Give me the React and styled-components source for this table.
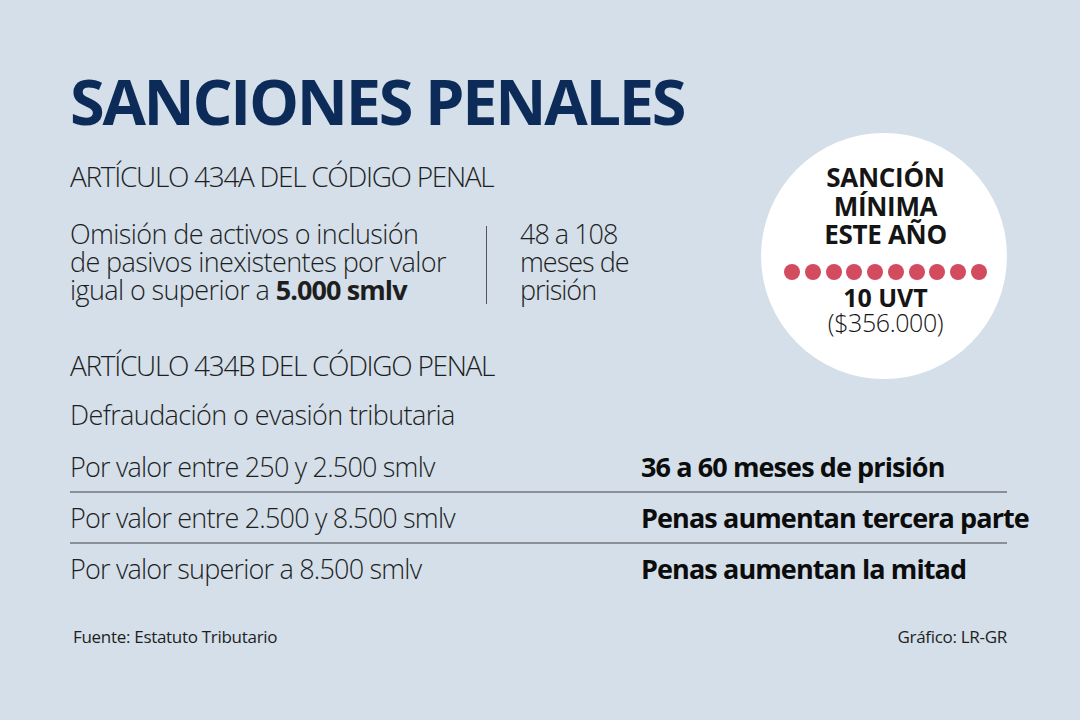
import React from "react";
import styled, { createGlobalStyle } from "styled-components";

const GlobalStyle = createGlobalStyle`
  html, body {
    margin: 0;
    padding: 0;
    background: #d4dfe9;
  }
`;

const Page = styled.div`
  width: 1080px;
  height: 720px;
  box-sizing: border-box;
  padding: 66px 73px 0 70px;
  background: #d4dfe9;
  font-family: "Open Sans", "Noto Sans", sans-serif;
  color: #1e1e1e;
  overflow: hidden;
`;

const Title = styled.h1`
  margin: 0;
  font-size: 63px;
  line-height: 70px;
  font-weight: 700;
  letter-spacing: -2.3px;
  color: #0d2b58;
`;

const TopRow = styled.div`
  display: flex;
  justify-content: space-between;
  align-items: flex-start;
`;

const LeftCol = styled.div`
  display: flex;
  flex-direction: column;
  padding-top: 22px;
`;

const Heading = styled.div`
  font-size: 28px;
  line-height: 36px;
  font-weight: 300;
  letter-spacing: -1.3px;
  text-transform: uppercase;
  white-space: nowrap;
`;

const Lead = styled.div`
  display: flex;
  align-items: stretch;
  margin: 26px 0 43px;
`;

const Desc = styled.div`
  width: 416px;
  font-size: 27px;
  line-height: 28px;
  font-weight: 300;
  letter-spacing: -0.6px;
  white-space: nowrap;

  b {
    font-weight: 700;
    letter-spacing: -0.9px;
  }
`;

const Divider = styled.div`
  width: 1px;
  background: #555;
  margin: 6px 33px 0 0;
`;

const Term = styled(Desc)`
  width: 120px;
  letter-spacing: -1px;
`;

const Circle = styled.div`
  width: 246px;
  height: 246px;
  flex-shrink: 0;
  margin-top: -3px;
  border-radius: 50%;
  background: #ffffff;
  display: flex;
  flex-direction: column;
  align-items: center;
  padding: 30px 0 0 3px;
  box-sizing: border-box;
  text-align: center;
  color: #151515;
`;

const CircleTitle = styled.div`
  font-size: 26px;
  line-height: 28.5px;
  font-weight: 700;
  letter-spacing: -0.3px;
`;

const Dots = styled.div`
  display: flex;
  gap: 4.8px;
  margin: 15px 0 5px;
`;

const Dot = styled.span`
  width: 16px;
  height: 16px;
  border-radius: 50%;
  background: #d24b5f;
`;

const Amount = styled.div`
  font-size: 25px;
  line-height: 25px;
  font-weight: ${(p) => (p.bold ? 700 : 300)};
  letter-spacing: ${(p) => (p.bold ? "0" : "-0.4px")};
`;

const Sub = styled.div`
  font-size: 27px;
  line-height: 36px;
  font-weight: 300;
  letter-spacing: -0.6px;
  margin: 14px 0 9px;
`;

const Table = styled.div`
  width: 937px;
`;

const Row = styled.div`
  display: grid;
  grid-template-columns: 571px 1fr;
  align-items: center;
  height: ${(p) => (p.last ? "48px" : "51px")};
  border-bottom: ${(p) => (p.last ? "none" : "2px solid #8a9096")};
  box-sizing: border-box;
`;

const Cell = styled.div`
  font-size: 27px;
  font-weight: ${(p) => (p.bold ? 700 : 300)};
  letter-spacing: ${(p) => (p.bold ? "-0.9px" : "-0.8px")};
  white-space: nowrap;
  color: ${(p) => (p.bold ? "#0c0c0c" : "#1e1e1e")};
`;

const Footer = styled.div`
  display: flex;
  justify-content: space-between;
  width: 937px;
  margin-top: 33px;
  font-size: 17px;
  font-weight: 400;
  letter-spacing: -0.3px;
  padding-left: 3px;
  box-sizing: border-box;
`;

const rows = [
  ["Por valor entre 250 y 2.500 smlv", "36 a 60 meses de prisión"],
  ["Por valor entre 2.500 y 8.500 smlv", "Penas aumentan tercera parte"],
  ["Por valor superior a 8.500 smlv", "Penas aumentan la mitad"],
];

const App = () => {
  return (
    <Page>
      <GlobalStyle />
      <Title>SANCIONES PENALES</Title>
      <TopRow>
        <LeftCol>
          <Heading>Artículo 434A del Código Penal</Heading>
          <Lead>
            <Desc>
              Omisión de activos o inclusión
              <br />
              de pasivos inexistentes por valor
              <br />
              igual o superior a <b>5.000 smlv</b>
            </Desc>
            <Divider />
            <Term>
              48 a 108
              <br />
              meses de
              <br />
              prisión
            </Term>
          </Lead>
          <Heading>Artículo 434B del Código Penal</Heading>
        </LeftCol>
        <Circle>
          <CircleTitle>
            SANCIÓN
            <br />
            MÍNIMA
            <br />
            ESTE AÑO
          </CircleTitle>
          <Dots>
            {Array.from({ length: 10 }).map((_, i) => (
              <Dot key={i} />
            ))}
          </Dots>
          <Amount bold>10 UVT</Amount>
          <Amount>($356.000)</Amount>
        </Circle>
      </TopRow>
      <Sub>Defraudación o evasión tributaria</Sub>
      <Table>
        {rows.map(([a, b], i) => (
          <Row key={a} last={i === rows.length - 1}>
            <Cell>{a}</Cell>
            <Cell bold>{b}</Cell>
          </Row>
        ))}
      </Table>
      <Footer>
        <span>Fuente: Estatuto Tributario</span>
        <span>Gráfico: LR-GR</span>
      </Footer>
    </Page>
  );
};

export default App;
